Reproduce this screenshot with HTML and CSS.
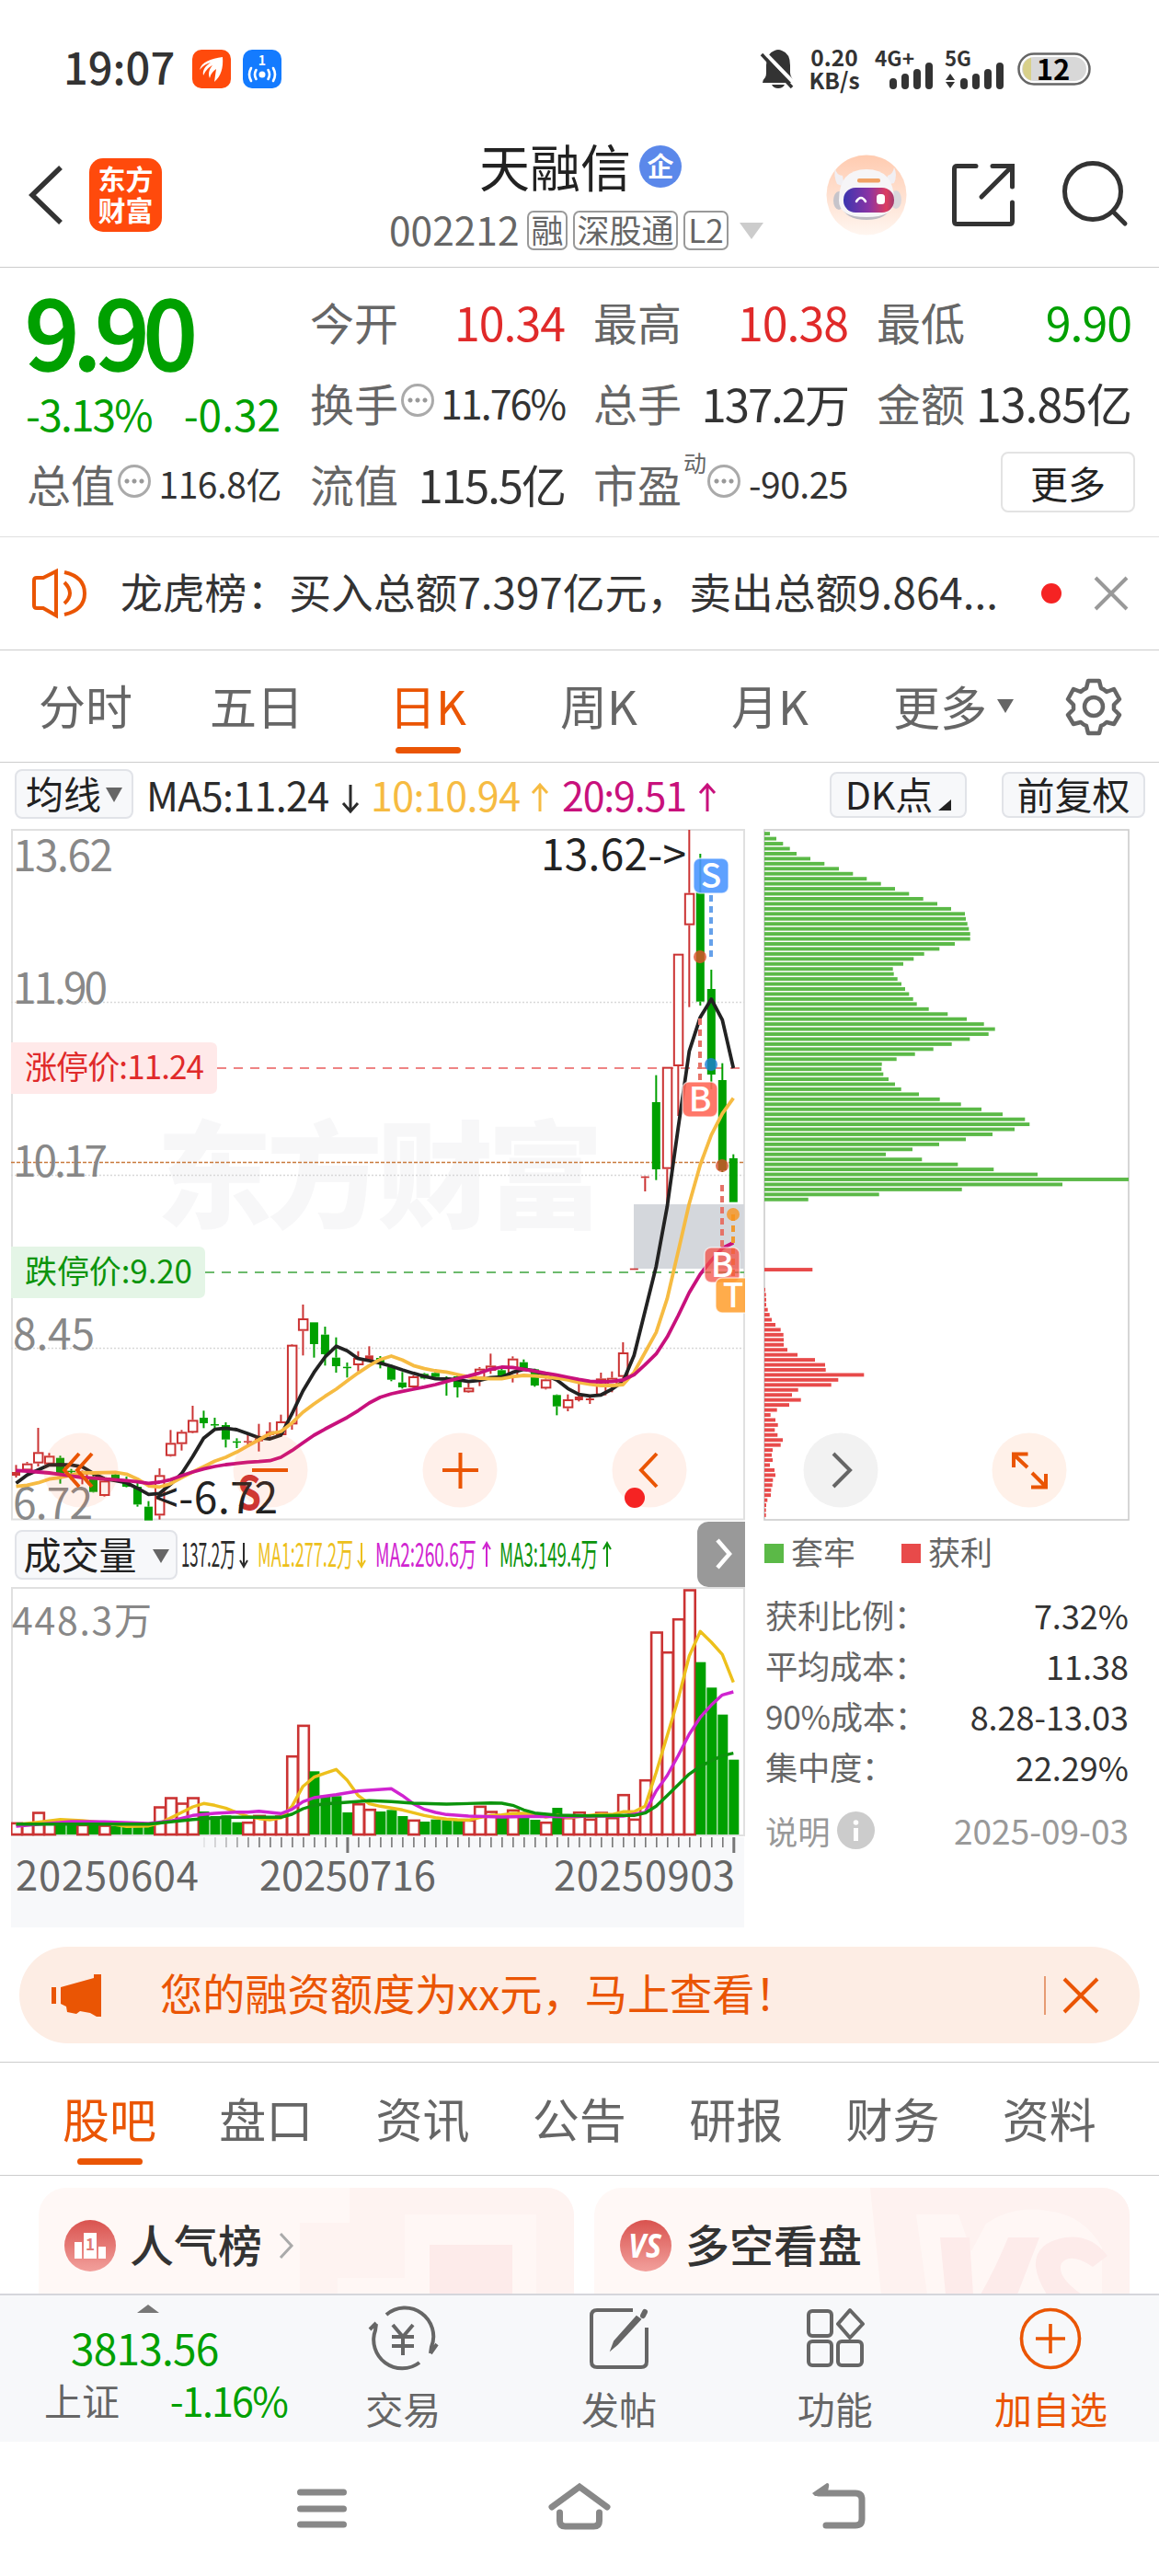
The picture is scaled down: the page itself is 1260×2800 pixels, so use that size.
FILE: index.html
```html
<!DOCTYPE html>
<html lang="zh-CN">
<head>
  <meta charset="UTF-8">
  <meta name="viewport" content="width=device-width, initial-scale=1.0">
  <title>天融信 002212</title>
  <link rel="stylesheet" href="styles.css">
</head>
<body>
  <div class="status-bar">
    <div class="status-left">
      <span class="clock">19:07</span>
      <svg class="app-dot" width="42" height="42" viewBox="0 0 42 42">
        <rect width="42" height="42" rx="10" fill="#ff4a0c"/>
        <path d="M33 8C20 10 10 13 8 22c4-5 8-7 12-8-6 4-9 8-8 14 3-6 6-9 10-11-4 5-5 9-3 14 1-5 4-8 7-10l-2 14c7-6 10-15 9-27z" fill="#fff"/>
      </svg>
      <svg class="app-dot" width="42" height="42" viewBox="0 0 42 42">
        <rect width="42" height="42" rx="10" fill="#147bff"/>
        <text x="21" y="17" class="hotspot-num">1</text>
        <circle cx="21" cy="27" r="3.5" fill="#fff"/>
        <g fill="none" stroke="#fff" stroke-width="2.6" stroke-linecap="round">
          <path d="M14.500 22q-3 5 0 10M9 20q-4 7 0 14M27.500 22q3 5 0 10M33 20q4 7 0 14"/>
        </g>
      </svg>
    </div>
    <div class="status-right">
      <svg width="38" height="43" viewBox="0 0 38 43">
        <path d="M2 36q0-3 3-6 1-2 1-5V17Q6 4 15 1q4-2 8 0 9 3 9 16v8q0 3 2 6l2 5z" fill="#333"/>
        <path d="M12 38h14q-2 4-7 4t-7-4z" fill="#333"/>
        <path d="M4 3l33 34" stroke="#fff" stroke-width="4"/>
        <path d="M1 5l33 36" stroke="#333" stroke-width="3.500"/>
      </svg>
      <span class="net-speed">0.20<br>KB/s</span>
      <svg class="signal" width="64" height="44" viewBox="0 0 64 44">
        <text x="1" y="19" class="sig-text" textLength="43" lengthAdjust="spacingAndGlyphs">4G+</text>
        <path d="M21 40V36M34 40V31M47 40V26M60 40V19" class="sig-bars"/>
      </svg>
      <svg class="signal" width="66" height="44" viewBox="0 0 66 44">
        <text x="0" y="19" class="sig-text" textLength="29" lengthAdjust="spacingAndGlyphs">5G</text>
        <path d="M1 34l5-7 5 7zM1 36l5 7 5-7z" fill="#333"/>
        <path d="M21 40V36M34 40V31M47 40V26M60 40V19" class="sig-bars"/>
      </svg>
      <svg class="battery" width="80" height="36" viewBox="0 0 80 36">
        <rect x="1.500" y="1.500" width="77" height="33" rx="16.500" fill="#fff" stroke="#666" stroke-width="2.500"/>
        <rect x="5" y="5" width="70" height="26" rx="13" fill="#d8d8d8"/>
        <path d="M15 5.500q-9 3-9 12.500t9 12.500z" fill="#d8d08a"/>
        <text x="39" y="29.500" class="battery-num">12</text>
      </svg>
    </div>
  </div>

  <div class="header">
    <svg class="back" width="38" height="64" viewBox="0 0 38 64"><path d="M35 2L4 32l31 30" fill="none" stroke="#333" stroke-width="5.500"/></svg>
    <div class="brand">东方<br>财富</div>
    <div class="stock">
      <div class="stock-name">天融信<span class="corp">企</span></div>
      <div class="stock-code">
        <span class="code">002212</span>
        <span class="badge">融</span>
        <span class="badge wide">深股通</span>
        <span class="badge level">L2</span>
        <svg class="caret" width="26" height="18" viewBox="0 0 26 18"><path d="M0 0h26L13 18z" fill="#ccc"/></svg>
      </div>
    </div>
    <svg class="robot" width="88" height="88" viewBox="0 0 88 88">
      <defs>
        <linearGradient id="peach" x1="0" y1="0" x2="0" y2="1"><stop offset="0" stop-color="#ffcbb0"/><stop offset="1" stop-color="#fff6f0"/></linearGradient>
        <linearGradient id="visor" x1="0" y1="0" x2="1" y2="0"><stop offset="0" stop-color="#3a35b0"/><stop offset=".5" stop-color="#8a34a4"/><stop offset=".85" stop-color="#dc3c60"/><stop offset="1" stop-color="#a03a70"/></linearGradient>
      </defs>
      <circle cx="44" cy="44" r="43.500" fill="url(#peach)"/>
      <path d="M10 15q1 7 8 8l2 12-8-3q-4-9-2-17zM74 14q-1 7-7 9l-2 10 9-2q4-9 0-17z" fill="#f1eff3"/>
      <ellipse cx="14" cy="50" rx="6" ry="10" fill="#c6c4ca"/>
      <ellipse cx="76" cy="49" rx="6" ry="10" fill="#d9d7dc"/>
      <path d="M16 55q5 16 28 16t27-16z" fill="#bdbac2"/>
      <path d="M14 50q0-34 30-34t30 34q0 18-30 18T14 50z" fill="#f6f5f7"/>
      <rect x="34" y="26" width="25" height="4.500" rx="2" fill="#f0a265"/>
      <rect x="19" y="36" width="55" height="27" rx="13" fill="url(#visor)"/>
      <path d="M33 51q5-8 10 0" fill="none" stroke="#fff" stroke-width="2.500" stroke-linecap="round"/>
      <rect x="55" y="43" width="9" height="11" rx="3.500" fill="#fff"/>
    </svg>
    <svg class="share" width="70" height="70" viewBox="0 0 70 70">
      <path d="M27 3.500H6.500q-3 0-3 3v57q0 3 3 3h57q3 0 3-3V43M45 3.500h21.500V26M66 4L33 37" fill="none" stroke="#333" stroke-width="5" stroke-linecap="round"/>
    </svg>
    <svg class="search" width="72" height="72" viewBox="0 0 72 72">
      <circle cx="33" cy="33" r="30.500" fill="none" stroke="#333" stroke-width="5"/>
      <path d="M55 55l13 13" stroke="#333" stroke-width="5" stroke-linecap="round"/>
    </svg>
  </div>

  <div class="quote">
    <div class="price-box">
      <div class="price">9.90</div>
      <div class="change"><span class="pct">-3.13%</span><span>-0.32</span></div>
    </div>
    <div class="cell"><label>今开</label><span class="up">10.34</span></div>
    <div class="cell"><label>最高</label><span class="up">10.38</span></div>
    <div class="cell"><label>最低</label><span class="down">9.90</span></div>
    <div class="cell"><label>换手</label><i class="more-dot"></i><span class="mid">11.76%</span></div>
    <div class="cell"><label>总手</label><span class="tight">137.2万</span></div>
    <div class="cell"><label>金额</label><span>13.85亿</span></div>
    <div class="cell"><label>总值</label><i class="more-dot"></i><span class="small">116.8亿</span></div>
    <div class="cell"><label>流值</label><span class="tight">115.5亿</span></div>
    <div class="cell"><label>市盈</label><sup>动</sup><i class="more-dot after-sup"></i><span class="small">-90.25</span></div>
    <div class="cell"><button class="more-btn">更多</button></div>
  </div>

  <div class="notice">
    <svg width="60" height="54" viewBox="0 0 60 54">
      <path d="M3 13q0-3 3-3h7L27 3v48L13 43H6q-3 0-3-3zM36 15q12 12 0 23M36 4q22 5 22 23T36 50" fill="none" stroke="#ea5504" stroke-width="4"/>
    </svg>
    <span class="notice-text">龙虎榜：买入总额7.397亿元，卖出总额9.864...</span>
    <i class="red-dot"></i>
    <svg width="36" height="36" viewBox="0 0 36 36"><path d="M1 1l34 34M35 1L1 35" stroke="#999" stroke-width="4"/></svg>
  </div>

  <div class="k-tabs">
    <span>分时</span>
    <span>五日</span>
    <span class="active">日K</span>
    <span>周K</span>
    <span>月K</span>
    <span class="k-more">更多<svg width="18" height="15" viewBox="0 0 18 15"><path d="M0 0h18L9 15z" fill="#666"/></svg></span>
    <svg class="gear" width="62" height="62" viewBox="0 0 62 62">
      <path d="M25 3h12l2 8q3 1 6 4l8-3 6 11-6 6v5l6 6-6 10-8-2q-3 3-6 4l-2 8H25l-2-8q-3-1-6-4l-8 2-6-10 6-6v-5l-6-6 6-11 8 3q3-3 6-4z" fill="none" stroke="#666" stroke-width="4.500" stroke-linejoin="round"/>
      <circle cx="31" cy="31" r="10" fill="none" stroke="#666" stroke-width="4.500"/>
    </svg>
  </div>

  <div class="charts">
    <div class="left-col">
      <div class="ma-row">
        <button class="pill ma-pill">均线<svg width="18" height="16" viewBox="0 0 18 16"><path d="M0 0h18L9 16z" fill="#666"/></svg></button>
        <svg class="ma-legend" width="650" height="60" viewBox="0 0 650 60">
          <text x="-2" y="42" fill="#2b2b2b" textLength="199">MA5:11.24</text>
          <path d="M220 13v29M212 33l8 9 8-9" stroke="#2b2b2b"/>
          <text x="242" y="42" fill="#f6bb42" textLength="163">10:10.94</text>
          <path d="M426 42V13M418 22l8-9 8 9" stroke="#f6bb42"/>
          <text x="450" y="42" fill="#c8117c" textLength="136">20:9.51</text>
          <path d="M608 42V13M600 22l8-9 8 9" stroke="#c8117c"/>
        </svg>
      </div>
      <svg id="kline" width="798" height="752" viewBox="12 901 798 752"></svg>
      <div class="vol-row">
        <button class="pill vol-pill">成交量<svg width="18" height="15" viewBox="0 0 18 15"><path d="M0 0h18L9 15z" fill="#666"/></svg></button>
        <svg class="vol-legend" width="480" height="60" viewBox="0 0 480 60">
          <text x="-1" y="43" fill="#2b2b2b" textLength="59" lengthAdjust="spacingAndGlyphs">137.2万</text>
          <path d="M67 17v26M63 36l4 7 4-7" stroke="#2b2b2b"/>
          <text x="82" y="43" fill="#edc01c" textLength="104" lengthAdjust="spacingAndGlyphs">MA1:277.2万</text>
          <path d="M195 17v26M191 36l4 7 4-7" stroke="#edc01c"/>
          <text x="210" y="43" fill="#d024d0" textLength="110" lengthAdjust="spacingAndGlyphs">MA2:260.6万</text>
          <path d="M331 43V17M327 24l4-7 4 7" stroke="#d024d0"/>
          <text x="345" y="43" fill="#0c940c" textLength="107" lengthAdjust="spacingAndGlyphs">MA3:149.4万</text>
          <path d="M462 43V17M458 24l4-7 4 7" stroke="#0c940c"/>
        </svg>
        <div class="collapse"><svg width="20" height="34" viewBox="0 0 20 34"><path d="M3 2l13 15L3 32" fill="none" stroke="#fff" stroke-width="4.500"/></svg></div>
      </div>
      <svg id="volume" width="798" height="370" viewBox="12 1725 798 370"></svg>
    </div>

    <div class="right-col">
      <div class="opt-row">
        <button class="pill dk">DK点<svg width="14" height="12" viewBox="0 0 14 12"><path d="M14 0v12H0z" fill="#222"/></svg></button>
        <button class="pill fq">前复权</button>
      </div>
      <svg id="chips" width="400" height="752" viewBox="830 901 400 752"></svg>
      <div class="chip-legend"><i class="sq green"></i>套牢<i class="sq red"></i>获利</div>
      <div class="chip-info"><span>获利比例：</span><b>7.32%</b></div>
      <div class="chip-info"><span>平均成本：</span><b>11.38</b></div>
      <div class="chip-info"><span>90%成本：</span><b>8.28-13.03</b></div>
      <div class="chip-info"><span>集中度：</span><b>22.29%</b></div>
      <div class="chip-note"><span>说明</span><svg width="41" height="41" viewBox="0 0 41 41"><circle cx="20.500" cy="20.500" r="20.500" fill="#ccc"/><circle cx="20.500" cy="12" r="2.800" fill="#fff"/><path d="M20.500 18v14" stroke="#fff" stroke-width="5"/></svg><b>2025-09-03</b></div>
    </div>
  </div>

  <div class="banner">
    <svg width="54" height="48" viewBox="0 0 54 48"><path d="M0 15h5v18H0zM10 15L46 5V1h8v46h-5l-7-4-11-2-4 3-10-2-1-6-6-3z" fill="#ea5504"/></svg>
    <span class="banner-text">您的融资额度为xx元，马上查看！</span>
    <i class="divider"></i>
    <svg width="38" height="38" viewBox="0 0 38 38"><path d="M1 1l36 36M37 1L1 37" stroke="#ea5504" stroke-width="4"/></svg>
  </div>

  <div class="info-tabs">
    <span class="active">股吧</span>
    <span>盘口</span>
    <span>资讯</span>
    <span>公告</span>
    <span>研报</span>
    <span>财务</span>
    <span>资料</span>
  </div>

  <div class="cards">
    <div class="card">
      <svg class="card-bg" width="582" height="116" viewBox="0 0 582 116">
        <path d="M338 0h244v116H284V38h54z" fill="#fef3f1"/>
        <path d="M398 29h143v87H325V98h73z" fill="#fff7f5"/>
        <path d="M425 62h90v54h-90z" fill="#fdebea"/>
      </svg>
      <svg class="card-icon" width="56" height="56" viewBox="0 0 56 56">
        <defs><linearGradient id="rose" x1="0" y1="0" x2="0" y2="1"><stop offset="0" stop-color="#d9534f"/><stop offset="1" stop-color="#f2a09c"/></linearGradient></defs>
        <circle cx="28" cy="28" r="28" fill="url(#rose)"/>
        <path d="M11 24h8v18h-8zM21 14h14v28H21zM37 29h8v13h-8z" fill="#fff"/>
        <text x="28" y="33" class="rank-num">1</text>
      </svg>
      <span class="card-title">人气榜</span>
      <svg width="17" height="28" viewBox="0 0 17 28"><path d="M2 1l12 13L2 27" fill="none" stroke="#aaa" stroke-width="3"/></svg>
    </div>
    <div class="card">
      <svg class="card-bg" width="582" height="116" viewBox="0 0 582 116">
        <path d="M300 0h282v116H312z" fill="#fef2f0"/>
        <path d="M350 29h46l14 40 16-30q30-20 66-14 40 4 60 40v51H362z" fill="#fff7f5"/>
        <path d="M376 54h32l4 62h-30zM450 54q-14 34-30 62h40l24-62zM558 74q-18-24-46-20-34 6-32 32 2 14 12 30h38q-28-20-22-34 10-12 34 4z" fill="#fdebea"/>
      </svg>
      <svg class="card-icon" width="56" height="56" viewBox="0 0 56 56">
        <circle cx="28" cy="28" r="28" fill="url(#rose)"/>
        <text x="27" y="41" class="vs" textLength="36" lengthAdjust="spacingAndGlyphs">VS</text>
      </svg>
      <span class="card-title">多空看盘</span>
    </div>
  </div>

  <div class="toolbar">
    <div class="index">
      <svg width="24" height="9" viewBox="0 0 24 9"><path d="M12 0l12 9H0z" fill="#777"/></svg>
      <div class="index-num">3813.56</div>
      <div class="index-row"><span>上证</span><span class="index-pct">-1.16%</span></div>
    </div>
    <div class="tool">
      <svg width="78" height="70" viewBox="0 0 78 70" fill="none" stroke="#666" stroke-width="4">
        <path d="M21 9A31 31 0 0 1 70 44l-1 7M69 51l7-10M57 61A31 31 0 0 1 9 26l1-7M10 18l-7 7"/>
        <path d="M28 20l11 13 11-13M27 33h24M27 43h24M39 33v20"/>
      </svg>
      <span>交易</span>
    </div>
    <div class="tool">
      <svg width="66" height="70" viewBox="0 0 66 70" fill="none" stroke="#666" stroke-width="4">
        <path d="M48 4H9q-6 0-6 6v50q0 6 6 6h48q6 0 6-6V23"/>
        <path d="M59 10l2-4" stroke-width="6" stroke-linecap="round"/>
        <path d="M56 14l-25 27-6 5 3-8 24-27z" fill="#666" stroke-width="2"/>
      </svg>
      <span>发帖</span>
    </div>
    <div class="tool">
      <svg width="64" height="70" viewBox="0 0 64 70" fill="none" stroke="#666" stroke-width="4" stroke-linejoin="round">
        <rect x="3" y="5" width="25" height="27" rx="4"/>
        <rect x="3" y="38" width="25" height="26" rx="4"/>
        <rect x="35" y="38" width="26" height="26" rx="4"/>
        <path d="M48 4l14 15-14 15-13-15z"/>
      </svg>
      <span>功能</span>
    </div>
    <div class="tool add">
      <svg width="68" height="70" viewBox="0 0 68 70" fill="none" stroke="#ea5504" stroke-width="3.600">
        <circle cx="34" cy="35" r="31.500"/>
        <path d="M18 35h32M34 19v32"/>
      </svg>
      <span>加自选</span>
    </div>
  </div>

  <div class="nav">
    <svg width="54" height="50" viewBox="0 0 54 50"><path d="M3.500 11h47M3.500 29h47M3.500 46h47" stroke="#888" stroke-width="7" stroke-linecap="round"/></svg>
    <svg width="68" height="52" viewBox="0 0 68 52"><path d="M4 27L34 5l30 22M12.500 33v9q0 6 6 6h31q6 0 6-6v-9" fill="none" stroke="#888" stroke-width="7" stroke-linecap="round"/></svg>
    <svg width="58" height="52" viewBox="0 0 58 52"><path d="M15 47h32q7 0 7-7V19q0-7-7-7H7" fill="none" stroke="#888" stroke-width="7" stroke-linecap="round"/><path d="M0 12L16 1q3 0 2 4l-2 10H3z" fill="#888"/></svg>
  </div>

  <script src="charts.js"></script>
</body>
</html>
```

FILE: styles.css
```css
* {
  box-sizing: border-box;
}
body {
  margin: 0;
  width: 1260px;
  height: 2800px;
  overflow: hidden;
  background: #fff;
  color: #333;
  font-family: "Noto Sans CJK SC", "Noto Sans", sans-serif;
  font-size: 46px;
  line-height: 1;
}
svg {
  display: block;
  flex: none;
  overflow: visible;
}
#kline, #volume, #chips, .card-bg {
  overflow: hidden;
}
button {
  font-family: inherit;
  padding: 0;
  color: #222;
}
i {
  display: block;
  flex: none;
}
b {
  font-weight: 400;
}

/* status bar */
.status-bar {
  height: 150px;
  display: flex;
  justify-content: space-between;
  padding: 0 74px 0 69px;
}
.status-left, .status-right {
  display: flex;
  align-items: center;
}
.clock {
  font-size: 47px;
  font-weight: 500;
  width: 140px;
  line-height: 60px;
  margin-top: -6px;
}
.app-dot {
  margin-right: 13px;
}
.hotspot-num {
  font-size: 14px;
  font-weight: 700;
  fill: #fff;
  text-anchor: middle;
}
.net-speed {
  font-size: 24.500px;
  font-weight: 600;
  line-height: 25px;
  width: 56px;
  margin: -3px 15px 0 14px;
  text-align: center;
  white-space: nowrap;
}
.signal {
  margin-right: 13px;
}
.sig-text {
  font-size: 22px;
  font-weight: 700;
  fill: #333;
}
.sig-bars {
  stroke: #333;
  stroke-width: 8;
  stroke-linecap: round;
}
.battery-num {
  font-size: 31px;
  font-weight: 700;
  text-anchor: middle;
  fill: #000;
}

/* header */
.header {
  height: 141px;
  display: flex;
  border-bottom: 1px solid #ccc;
  padding-left: 31px;
}
.back {
  margin-top: 30px;
}
.brand {
  width: 79px;
  height: 80px;
  margin: 22px 0 0 28px;
  border-radius: 15px;
  background: #ff4a0c;
  color: #fff;
  font-size: 30px;
  font-weight: 700;
  line-height: 34px;
  text-align: center;
  padding-top: 4px;
}
.stock {
  width: 722px;
  padding-left: 247px;
}
.stock-name {
  font-size: 55px;
  height: 60px;
  line-height: 60px;
  color: #222;
  display: flex;
  align-items: center;
  margin: -1px 0 0 98px;
}
.corp {
  width: 46px;
  height: 46px;
  margin: 4px 0 0 9px;
  border-radius: 50%;
  background: #5b88ea;
  color: #fff;
  font-size: 29px;
  font-weight: 700;
  line-height: 42px;
  text-align: center;
}
.stock-code {
  display: flex;
  align-items: center;
  margin-top: 20px;
  color: #666;
}
.code {
  font-size: 42.500px;
  line-height: 44px;
  width: 150px;
  margin-top: -4px;
}
.badge {
  width: 44px;
  height: 43px;
  border: 2px solid #999;
  border-radius: 7px;
  margin-right: 6px;
  font-size: 35px;
  line-height: 35px;
  text-align: center;
  white-space: nowrap;
}
.badge.wide {
  width: 114px;
}
.badge.level {
  width: 49px;
}
.caret {
  margin-left: 6px;
}
.robot {
  margin-top: 18px;
}
.share {
  margin: 27px 0 0 48px;
}
.search {
  margin: 25px 0 0 51px;
}

/* quote grid */
.quote {
  height: 293px;
  padding: 16px 30px 0;
  border-bottom: 1px solid #e0e0e0;
  display: grid;
  grid-template-columns: repeat(4, 276px);
  grid-template-rows: 88px 88px 88px;
  justify-content: space-between;
}
.price-box {
  grid-row: span 2;
  color: #00a000;
}
.price {
  font-size: 104px;
  font-weight: 500;
  line-height: 106px;
  letter-spacing: -7px;
  margin: -2px 0 0 -3px;
  -webkit-text-stroke: 1.500px #00a000;
}
.change {
  display: flex;
  justify-content: space-between;
  font-size: 46px;
  line-height: 60px;
  margin: 8px 1px 0 -2px;
}
.pct {
  letter-spacing: -1.800px;
}
.cell {
  display: flex;
  align-items: center;
  height: 84px;
  white-space: nowrap;
}
.cell label {
  font-size: 48px;
  color: #666;
  margin-left: -1px;
}
.cell span {
  margin-left: auto;
  font-size: 50px;
  letter-spacing: -1px;
}
.cell .tight {
  font-size: 49px;
  letter-spacing: -2px;
}
.cell .mid {
  font-size: 43px;
  letter-spacing: -2px;
}
.cell .small {
  font-size: 39px;
  letter-spacing: -.500px;
}
.cell sup {
  font-size: 25px;
  color: #666;
  margin: -46px 0 0 2px;
}
.up {
  color: #e02a2a;
}
.down {
  color: #00a000;
}
.more-dot {
  width: 36px;
  height: 36px;
  margin: -4px 0 0 3px;
  border: 3px solid #aaa;
  border-radius: 50%;
  background: radial-gradient(circle, #999 2px, transparent 3px) center / 8px 30px repeat-x;
  background-clip: content-box;
  padding: 0 3px;
}
.after-sup {
  margin-left: 1px;
}
.more-btn {
  width: 146px;
  height: 66px;
  margin: -3px -4px 0 auto;
  border: 2px solid #e3e3e3;
  border-radius: 8px;
  background: #fff;
  font-size: 41px;
  line-height: 54px;
}

/* notice */
.notice {
  height: 123px;
  border-bottom: 1px solid #ccc;
  padding: 0 34px 0;
  display: flex;
  align-items: center;
}
.notice-text {
  width: 990px;
  margin-left: 37px;
  font-size: 45.800px;
  margin-top: -5px;
  white-space: nowrap;
}
.red-dot {
  width: 22px;
  height: 22px;
  margin: 0 36px 0 11px;
  border-radius: 50%;
  background: #f52323;
}

/* k-line tabs */
.k-tabs {
  height: 122px;
  border-bottom: 1px solid #ccc;
  display: flex;
  color: #666;
  font-size: 51px;
}
.k-tabs span {
  width: 186px;
  height: 120px;
  line-height: 119px;
  text-align: center;
}
.active {
  color: #ea5504;
}
.active::after {
  content: "";
  display: block;
  width: 71px;
  height: 7px;
  border-radius: 4px;
  background: #ea5504;
}
.k-tabs .active::after {
  margin: -14px auto 0;
}
.k-tabs .k-more {
  display: flex;
  align-items: center;
  gap: 11px;
  padding-left: 41px;
}
.gear {
  margin: 30px 0 0 42px;
}

/* charts area */
.charts {
  display: flex;
  height: 1266px;
  padding-left: 12px;
}
.left-col {
  width: 798px;
}
.right-col {
  width: 400px;
  margin-left: 20px;
}
.ma-row, .opt-row {
  height: 72px;
  display: flex;
  align-items: flex-start;
  padding-top: 7px;
}
.pill {
  display: flex;
  align-items: center;
  justify-content: center;
  border: 2px solid #e1e3e8;
  border-radius: 8px;
  background: #f7f8fa;
  height: 54px;
  font-size: 41px;
  line-height: 44px;
  padding-bottom: 4px;
  white-space: nowrap;
  flex: none;
}
.ma-pill {
  width: 129px;
  margin-left: 4px;
  gap: 5px;
}
.pill svg {
  margin-top: 6px;
}
.ma-legend {
  margin: 4px 0 0 16px;
}
.ma-legend text {
  font-size: 43px;
}
.ma-legend path, .vol-legend path {
  fill: none;
  stroke-width: 3;
}
.vol-row {
  height: 72px;
  display: flex;
  align-items: flex-start;
}
.vol-pill {
  width: 177px;
  margin: 10px 0 0 4px;
  gap: 17px;
}
.vol-legend {
  margin: 7px 0 0 5px;
}
.vol-legend text {
  font-size: 36px;
}
.vol-legend path {
  stroke-width: 2;
}
.collapse {
  width: 52px;
  height: 71px;
  margin: 1px 0 0 auto;
  padding: 18px 0 0 19px;
  border-radius: 12px 0 0 12px;
  background: #999;
}
.opt-row {
  margin-right: -20px;
}
.dk {
  width: 149px;
  height: 50px;
  margin: 3px 0 0 72px;
  gap: 6px;
  padding-right: 6px;
}
.dk svg {
  margin: 26px -6px 0 0;
}
.fq {
  width: 156px;
  height: 50px;
  margin: 3px 0 0 38px;
}
.axis-label {
  fill: #888;
  font-size: 46px;
}
.date-label {
  fill: #666;
  font-size: 43.500px;
}
.limit-label {
  font-size: 35px;
}
.watermark {
  font-size: 126px;
  font-weight: 900;
  fill: #f7f7f8;
}
.tag-letter {
  font-size: 37px;
  font-weight: 500;
  fill: #fff;
  text-anchor: middle;
}
.chip-legend {
  display: flex;
  align-items: center;
  height: 73px;
  font-size: 35px;
  line-height: 60px;
  color: #666;
  padding-bottom: 6px;
  margin-top: -1px;
}
.sq {
  width: 21px;
  height: 21px;
  margin: 6px 8px 0 1px;
}
.sq.green {
  background: #5bb947;
}
.sq.red {
  background: #e84a4a;
  margin-left: 50px;
}
.chip-info, .chip-note {
  display: flex;
  justify-content: space-between;
  align-items: center;
  height: 55px;
  margin: 0 3px 0 2px;
  padding-top: 5px;
  font-size: 35.300px;
}
.chip-info span {
  color: #666;
  letter-spacing: -.300px;
}
.chip-info b {
  font-size: 36px;
}
.chip-note {
  height: 84px;
  color: #999;
}
.chip-note svg {
  margin: 0 auto 0 7px;
}
.chip-note b {
  font-size: 37px;
}

/* banner */
.banner {
  height: 105px;
  margin: 21px 21px 20px;
  padding: 0 45px 0 35px;
  border-radius: 53px;
  background: #fdede4;
  color: #ea5504;
  display: flex;
  align-items: center;
}
.banner-text {
  width: 962px;
  margin-left: 64px;
  font-size: 46.200px;
  margin-top: -6px;
}
.divider {
  width: 2px;
  height: 42px;
  margin-right: 19px;
  background: #e69b73;
}

/* info tabs */
.info-tabs {
  height: 124px;
  border-top: 1px solid #ccc;
  border-bottom: 1px solid #ccc;
  display: flex;
  padding-left: 68px;
  font-size: 51px;
  color: #666;
}
.info-tabs span {
  width: 170.400px;
  line-height: 120px;
}
.info-tabs .active::after {
  margin: -16px 0 0 16px;
}

/* cards */
.cards {
  height: 128px;
  overflow: hidden;
  display: flex;
  gap: 22px;
  padding: 13px 32px 0 42px;
}
.card {
  position: relative;
  width: 582px;
  height: 150px;
  padding: 35px 0 0 28px;
  border-radius: 30px 30px 0 0;
  background: #fff8f6;
  display: flex;
  align-items: flex-start;
  overflow: hidden;
}
.card-bg {
  position: absolute;
  left: 0;
  top: 0;
}
.card-icon {
  position: relative;
}
.card-title {
  position: relative;
  margin: -7px 18px 0 15px;
  font-size: 48px;
  font-weight: 500;
  line-height: 64px;
}
.card-icon + .card-title + svg {
  margin-top: 14px;
}
.rank-num {
  font-size: 17px;
  font-weight: 700;
  fill: #e07a76;
  text-anchor: middle;
}
.vs {
  font-family: "Open Sans", sans-serif;
  font-size: 36px;
  font-weight: 700;
  font-style: italic;
  fill: #fff;
  text-anchor: middle;
}

/* bottom toolbar */
.toolbar {
  height: 161px;
  border-top: 2px solid #d5d6db;
  background: #f7f8fa;
  display: flex;
}
.index {
  width: 321px;
  padding: 10px 0 0 48px;
  color: #00a000;
}
.index svg {
  margin-left: 101px;
}
.index-num {
  margin: 7px 0 0 29px;
  font-size: 46px;
  line-height: 60px;
  letter-spacing: -.800px;
}
.index-row {
  display: flex;
  justify-content: space-between;
  width: 264px;
  line-height: 54px;
}
.index-row span:first-child {
  font-size: 41px;
  color: #666;
}
.index-pct {
  font-size: 43px;
  letter-spacing: -1.800px;
}
.tool {
  width: 234.700px;
  padding-top: 12px;
  display: flex;
  flex-direction: column;
  align-items: center;
  gap: 20px;
  font-size: 41px;
  color: #666;
}
.tool.add {
  color: #ea5504;
}

/* system nav */
.nav {
  display: flex;
  padding: 44px 0 0 323px;
}
.nav svg + svg {
  margin-left: 219px;
}
```

FILE: charts.js
```js
const GREEN = '#00a000';
const RED = '#cb3333';
const STEP = 11.997;
const px = i => 17.5 + i * STEP;

// [up/down, high, body top, body bottom, low], thirds of a pixel below y=1240
const candles = [
  ['r', 1057, 1080, 1092, 1098], ['r', 1047, 1052, 1075, 1080], ['r', 936, 1015, 1052, 1062], ['r', 1018, 1027, 1055, 1060],
  ['g', 1027, 1034, 1090, 1118], ['g', 1070, 1076, 1080, 1105], ['r', 1075, 1082, 1100, 1120], ['g', 1085, 1100, 1145, 1147],
  ['r', 1100, 1108, 1158, 1160], ['g', 1080, 1088, 1105, 1112], ['g', 1095, 1105, 1128, 1130], ['g', 1115, 1128, 1186, 1193],
  ['g', 1175, 1193, 1238, 1238], ['r', 1068, 1090, 1222, 1235], ['r', 943, 985, 1028, 1030], ['r', 943, 949, 989, 1010],
  ['r', 864, 910, 952, 954], ['g', 880, 903, 921, 937], ['g', 903, 924, 928, 938], ['g', 918, 927, 974, 1000],
  ['g', 970, 980, 984, 1002], ['r', 955, 979, 983, 990], ['r', 923, 970, 980, 1013], ['r', 918, 947, 960, 965],
  ['r', 893, 915, 960, 965], ['r', 663, 665, 925, 942], ['r', 534, 579, 620, 700], ['g', 592, 592, 663, 707],
  ['g', 606, 632, 696, 733], ['g', 641, 707, 735, 756], ['g', 723, 737, 741, 772], ['r', 686, 708, 732, 752],
  ['r', 670, 700, 714, 716], ['g', 702, 708, 725, 742], ['g', 730, 737, 779, 784], ['g', 754, 788, 804, 808],
  ['r', 765, 768, 804, 806], ['g', 757, 760, 775, 778], ['g', 745, 757, 770, 775], ['g', 768, 772, 780, 831],
  ['g', 765, 768, 804, 837], ['r', 790, 805, 820, 822], ['r', 738, 743, 775, 800], ['r', 694, 733, 750, 760],
  ['g', 740, 748, 768, 770], ['r', 703, 710, 770, 788], ['g', 713, 722, 745, 750], ['g', 743, 745, 798, 802],
  ['r', 775, 778, 808, 811], ['g', 827, 829, 866, 895], ['r', 827, 843, 872, 882], ['r', 790, 834, 846, 850],
  ['r', 835, 840, 846, 858], ['r', 756, 775, 830, 832], ['r', 752, 773, 800, 820], ['r', 657, 690, 770, 775],
  ['r', 416, 416, 421, 421], ['r', 115, 116, 121, 165], ['g', -214, -126, 93, 128], ['r', -241, -241, 92, 207],
  ['r', -610, -610, -243, -81], ['r', -1014, -808, -703, -436], ['g', -936, -810, -454, -441], ['g', -558, -495, -216, -168],
  ['g', -253, -198, 96, 102], ['g', 44, 57, 200, 200]
];

const ma5 = [1117, 1090, 1073, 1057, 1056, 1057, 1063, 1085, 1102, 1108, 1115, 1133, 1153, 1150, 1120, 1085, 1030, 970, 941, 937, 942, 955, 968, 972, 960, 890, 815, 755, 705, 670, 685, 710, 717, 725, 735, 747, 758, 768, 776, 777, 779, 785, 781, 772, 770, 755, 745, 750, 765, 780, 808, 827, 832, 829, 810, 785, 700, 555, 410, 215, -43, -292, -403, -462, -394, -237];
const ma10 = [1127, 1123, 1115, 1103, 1098, 1090, 1082, 1083, 1082, 1081, 1087, 1103, 1125, 1129, 1118, 1098, 1080, 1063, 1045, 1032, 1015, 995, 975, 955, 948, 920, 885, 858, 833, 810, 783, 757, 733, 713, 702, 715, 733, 743, 750, 754, 762, 770, 774, 776, 776, 769, 765, 767, 770, 774, 780, 788, 794, 798, 798, 795, 755, 690, 625, 515, 361, 205, 78, -19, -89, -139];
const ma20 = [1075, 1077, 1080, 1083, 1088, 1093, 1098, 1100, 1103, 1105, 1108, 1112, 1117, 1113, 1105, 1092, 1080, 1070, 1062, 1056, 1052, 1048, 1046, 1043, 1032, 1010, 985, 960, 940, 921, 902, 880, 855, 836, 825, 817, 810, 803, 795, 785, 775, 767, 757, 745, 738, 739, 745, 751, 758, 764, 771, 778, 784, 786, 785, 780, 763, 730, 695, 640, 570, 495, 435, 390, 350, 332];

// bar tops, thirds of a pixel below y=1640
const volumes = [1022, 1025, 988, 1022, 1022, 1030, 1028, 1028, 1030, 1035, 1035, 1030, 1033, 970, 940, 958, 940, 987, 1002, 1000, 1022, 1020, 998, 1003, 1000, 804, 704, 856, 935, 937, 990, 960, 978, 987, 982, 1002, 1013, 1020, 1013, 1015, 1015, 1013, 968, 985, 1003, 980, 1005, 1014, 1020, 975, 1005, 987, 1010, 988, 1005, 930, 1010, 882, 400, 465, 357, 262, 500, 583, 671, 818];
// days that closed above the previous day although the candle itself is falling
const volumeUp = [58];
const vma1 = { 0: 1030, 2: 1022, 4: 1013, 6: 1017, 8: 1024, 10: 1036, 12: 1034, 13: 1025, 14: 1008, 15: 990, 16: 972, 17: 961, 18: 967, 19: 976, 20: 990, 21: 1003, 22: 1010, 23: 1014, 24: 1008, 25: 970, 26: 905, 27: 875, 28: 862, 29: 850, 30: 885, 31: 935, 32: 962, 33: 970, 34: 976, 35: 982, 36: 991, 37: 1000, 38: 1007, 39: 1012, 40: 1014, 41: 1015, 42: 1007, 43: 1000, 44: 998, 45: 994, 46: 993, 47: 995, 48: 1005, 49: 998, 50: 1007, 52: 1000, 53: 996, 54: 997, 55: 988, 56: 988, 57: 970, 58: 860, 59: 740, 60: 620, 61: 480, 62: 400, 63: 435, 64: 475, 65: 566 };
const vma2 = { 0: 1035, 5: 1020, 8: 1021, 12: 1026, 14: 1018, 16: 1000, 18: 993, 20: 989, 21: 989, 22: 986, 24: 994, 25: 980, 26: 955, 27: 942, 29: 932, 31: 920, 34: 913, 35: 935, 36: 962, 37: 980, 38: 990, 39: 997, 41: 1002, 44: 1005, 47: 1003, 50: 1004, 53: 1001, 55: 1002, 57: 990, 58: 920, 59: 870, 60: 805, 61: 735, 62: 680, 63: 640, 64: 607, 65: 597 };
const vma3 = { 0: 1028, 12: 1028, 16: 1013, 19: 1006, 24: 1006, 25: 996, 26: 978, 27: 967, 28: 962, 30: 957, 32: 952, 34: 955, 36: 960, 39: 963, 43: 959, 44: 960, 45: 967, 46: 982, 47: 992, 49: 999, 52: 1001, 55: 1000, 56: 1000, 57: 992, 58: 970, 59: 935, 60: 900, 61: 865, 62: 840, 63: 822, 64: 805, 65: 797 };

// cost distribution, bar lengths in thirds of a pixel
const trapped = [18, 39, 61, 83, 105, 150, 196, 243, 289, 334, 380, 426, 472, 518, 564, 609, 654, 657, 662, 667, 671, 671, 621, 571, 521, 487, 453, 419, 422, 434, 447, 459, 472, 485, 497, 536, 598, 660, 716, 752, 731, 670, 611, 551, 491, 431, 383, 382, 388, 405, 426, 446, 504, 572, 641, 708, 777, 850, 865, 816, 744, 657, 570, 483, 396, 514, 631, 748, 891, 1188, 972, 644, 374, 143];
const profit = [3, 5, 6, 6, 11, 17, 24, 36, 53, 62, 63, 63, 75, 108, 165, 198, 200, 325, 241, 218, 110, 90, 119, 81, 41, 20, 36, 44, 34, 43, 60, 53, 27, 24, 27, 18, 33, 36, 28, 26, 22, 21, 10, 6, 5, 5];

function curve(points, base, color, width) {
  const pts = Object.keys(points).map(i => px(+i).toFixed(1) + ',' + (base + points[i] / 3).toFixed(1)).join(' ');
  return `<polyline points="${pts}" fill="none" stroke="${color}" stroke-width="${width}" stroke-linejoin="round"/>`;
}

function hline(x1, x2, y, color, dash, width) {
  return `<path d="M${x1} ${y}H${x2}" stroke="${color}" stroke-width="${width || 2}" stroke-dasharray="${dash}"/>`;
}

function roundBtn(x, icon, fill, stroke) {
  return `<circle cx="${x}" cy="1598" r="40.5" fill="${fill}"/><path d="${icon}" fill="none" stroke="${stroke}" stroke-width="4"/>`;
}

function marker(x, y, letter, color) {
  return `<rect x="${x}" y="${y}" width="38" height="38" rx="7" fill="${color}" stroke="#fff" stroke-opacity=".6" stroke-width="1.5"/>` +
    `<text x="${x + 19}" y="${y + 32}" class="tag-letter">${letter}</text>`;
}

function drawKline() {
  const y = v => 1240 + v / 3;
  let s = '<text x="170" y="1325" class="watermark" textLength="486">东方财富</text>';
  s += '<rect x="13" y="902" width="796" height="749.5" fill="none" stroke="#e0e0e0" stroke-width="2"/>';
  [1089.5, 1277.5, 1465.5].forEach(v => { s += hline(12, 809, v, '#d8d8d8', '2 2', 1.5); });
  s += '<rect x="689" y="1309" width="120" height="70" fill="#d4d7dc"/>';
  s += hline(236, 804, 1161, '#ee8484', '10 8') + hline(223, 809, 1383, '#6cba6c', '10 8');
  s += hline(12, 809, 1263.5, '#c97a3c', '4 2', 1.5);

  [['13.62', 947, 109], ['11.90', 1091, 103], ['10.17', 1279, 103], ['8.45', 1467, 89], ['6.72', 1651, 87]].forEach(([t, ty, w]) => {
    s += `<text x="14" y="${ty}" class="axis-label" textLength="${w}">${t}</text>`;
  });

  candles.forEach(([t, hi, top, bot, lo], i) => {
    const x = px(i);
    const c = t === 'g' ? GREEN : RED;
    const h = Math.max((bot - top) / 3, 1.5);
    if (hi < top) s += `<path d="M${x} ${y(hi)}V${y(top)}" stroke="${c}" stroke-width="2"/>`;
    if (lo > bot) s += `<path d="M${x} ${y(bot)}V${y(lo)}" stroke="${c}" stroke-width="2"/>`;
    if (t === 'g' || h < 5) {
      s += `<rect x="${x - 4.5}" y="${y(top)}" width="9" height="${h}" fill="${c}"/>`;
    } else {
      s += `<rect x="${x - 4.5}" y="${y(top) + 1}" width="9.5" height="${h - 2}" fill="#fff" stroke="${c}" stroke-width="2"/>`;
    }
  });

  s += '<text x="271" y="1641" font-size="50" font-weight="700" fill="#cb3333" text-anchor="middle" textLength="26" lengthAdjust="spacingAndGlyphs">S</text>';
  s += '<text x="588" y="946" font-size="46" fill="#222" textLength="158">13.62-&gt;</text>';
  s += '<text x="168" y="1645" font-size="46" fill="#222" textLength="134">&lt;-6.72</text>';
  s += curve(ma5, 1240, '#222', 3.8) + curve(ma10, 1240, '#f6bb42', 3.8) + curve(ma20, 1240, '#c8117c', 3.8);

  // trade markers
  s += '<g stroke-width="4" stroke-dasharray="7 5" fill="none"><path d="M773 973V1041" stroke="#66a1ea"/><path d="M761 1107V1176M785 1288V1356" stroke="#e57368"/><path d="M797 1320V1390" stroke="#f09a30"/></g>';
  s += '<g fill-opacity=".8"><circle cx="761" cy="1040" r="7" fill="#e2502c"/><circle cx="773" cy="1157" r="7" fill="#1e7fd8"/><circle cx="785" cy="1267" r="7" fill="#d8502c"/><circle cx="797" cy="1320" r="7" fill="#f7941e"/></g>';
  s += marker(754, 933, 'S', 'rgba(77,151,255,.9)') + marker(742, 1176, 'B', 'rgba(255,105,90,.9)');
  s += marker(766, 1356, 'B', 'rgba(243,80,72,.75)') + marker(778, 1389, 'T', 'rgba(255,160,50,.88)');

  s += '<path d="M12 1133H229q7 0 7 7V1182q0 7-7 7H12z" fill="#ffe9e9"/><text x="27" y="1173" class="limit-label" fill="#e02a2a" textLength="195">涨停价:11.24</text>';
  s += '<path d="M12 1355H216q7 0 7 7V1404q0 7-7 7H12z" fill="#e4f5e6"/><text x="27" y="1395" class="limit-label" fill="#0c940c" textLength="182">跌停价:9.20</text>';

  const peach = 'rgba(255,112,48,.1)';
  s += roundBtn(88, 'M86 1580L70 1598L86 1616M100 1580L84 1598L100 1616', peach, '#ea5504');
  s += roundBtn(294, 'M274 1598H313', peach, '#ea5504');
  s += roundBtn(500, 'M481 1598H520M500.500 1579V1618', peach, '#ea5504');
  s += roundBtn(706, 'M714 1580L697 1598L714 1616', peach, '#ea5504');
  s += '<circle cx="690" cy="1628" r="11" fill="#f52323"/>';
  document.getElementById('kline').innerHTML = s;
}

function drawVolume() {
  const y = v => 1640 + v / 3;
  let s = '<rect x="13" y="1726" width="796" height="269" fill="none" stroke="#e0e0e0" stroke-width="2"/>';
  s += '<rect x="12" y="1997" width="797" height="98" fill="#f7f8fa"/>';
  s += '<text x="13" y="1777" fill="#888" font-size="41" textLength="152">448.3万</text>';
  volumes.forEach((v, i) => {
    const x = px(i);
    if (candles[i][0] === 'g' && !volumeUp.includes(i)) {
      s += `<rect x="${x - 5}" y="${y(v)}" width="11" height="${1994 - y(v)}" fill="${GREEN}"/>`;
    } else {
      s += `<rect x="${x - 5.2}" y="${y(v) + 1.2}" width="11.600" height="${1992.8 - y(v)}" fill="#fff" stroke="${RED}" stroke-width="2.6"/>`;
    }
  });
  s += curve(vma1, 1640, '#edc01c', 3.4) + curve(vma2, 1640, '#d024d0', 3.4) + curve(vma3, 1640, '#0c940c', 3.4);
  for (let i = 17; i < 66; i++) {
    const big = i === 30 || i === 65;
    s += `<path d="M${px(i) + .5} 1997v${big ? 17 : 11}" stroke="#777" stroke-width="${big ? 3 : 1.6}" opacity="${Math.min(1, (i - 16) / 6)}"/>`;
  }
  s += '<text x="17" y="2055" class="date-label" textLength="199">20250604</text>';
  s += '<text x="282" y="2055" class="date-label" textLength="192">20250716</text>';
  s += '<text x="602" y="2055" class="date-label" textLength="197">20250903</text>';
  document.getElementById('volume').innerHTML = s;
}

function drawChips() {
  const row = i => 904.2 + i * 5.447;
  let s = '<rect x="831" y="902" width="396" height="750" fill="none" stroke="#ccc" stroke-width="1.6"/>';
  const bar = (i, w, c) => `<rect x="831" y="${row(i).toFixed(2)}" width="${(w / 3).toFixed(1)}" height="3.9" fill="${c}"/>`;
  trapped.forEach((w, i) => { s += bar(i, w, '#5bb947'); });
  s += bar(87, 157, '#e84a4a');
  profit.forEach((w, i) => { s += bar(91 + i, w, '#e84a4a'); });
  s += roundBtn(914, 'M906 1580L924 1598L906 1616', '#f2f2f2', '#666');
  s += roundBtn(1119, 'M1102 1595V1580.500H1117.500M1102 1581L1117 1595M1122 1601L1137 1616M1121 1616.500H1137V1602', '#fff1e9', '#ea5504');
  document.getElementById('chips').innerHTML = s;
}

drawKline();
drawVolume();
drawChips();
```
